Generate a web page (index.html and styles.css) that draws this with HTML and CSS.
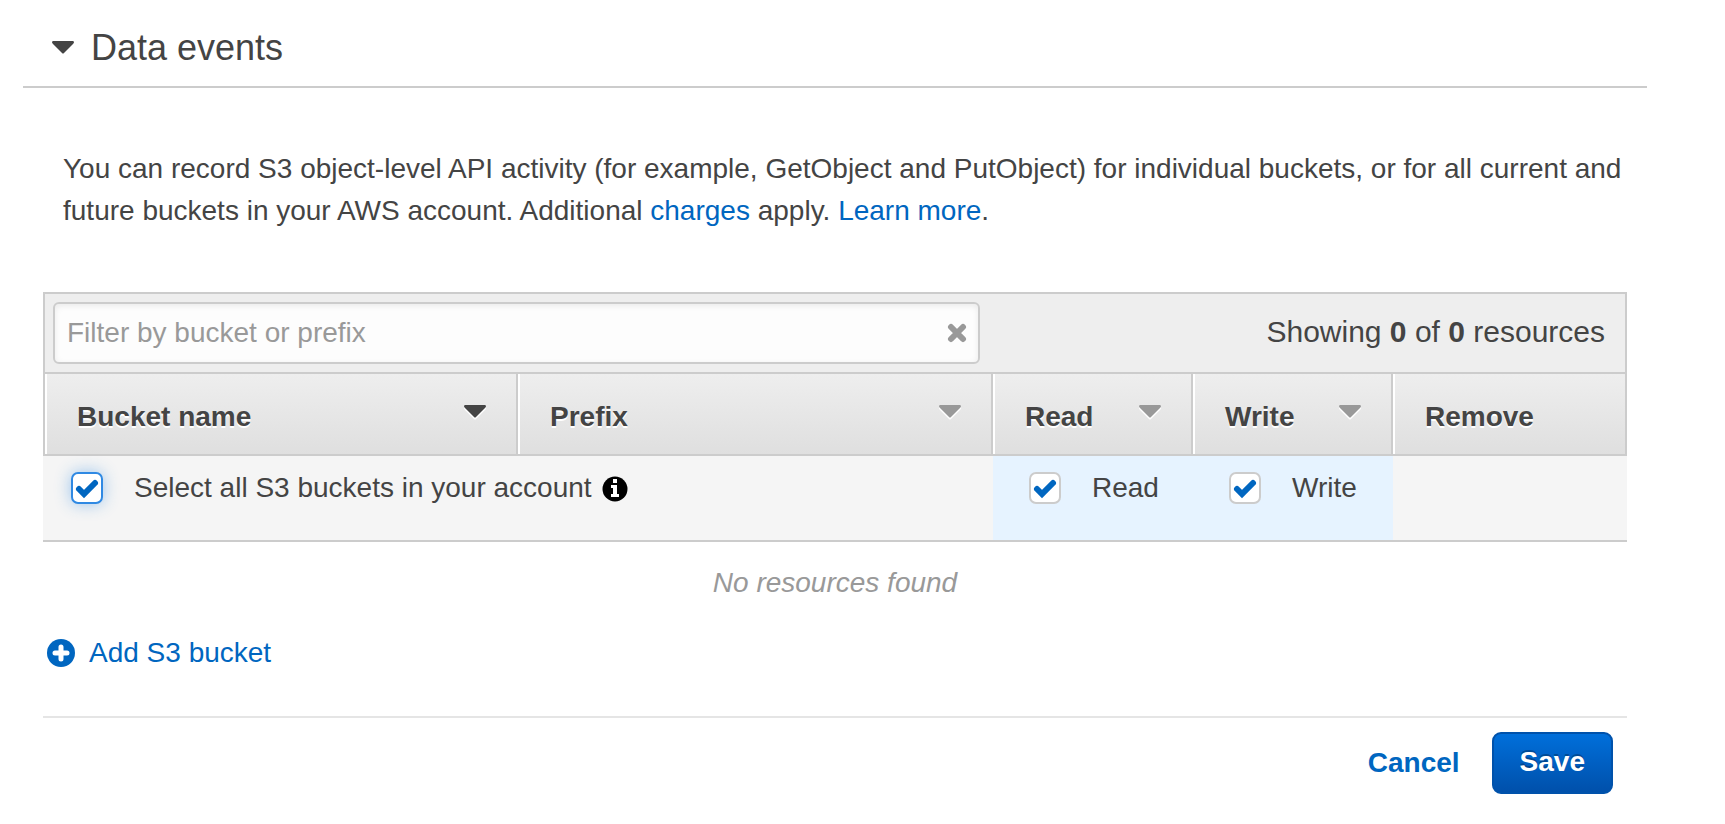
FILE: index.html
```html
<!DOCTYPE html>
<html lang="en">
<head>
  <meta charset="UTF-8" />
  <meta name="viewport" content="width=device-width, initial-scale=1" />
  <title>Data events</title>

  <link rel="stylesheet" href="styles.css">
</head>

<body>
  <div class="page">
    <!-- ===== SECTION HEADER ===== -->
    <div class="section-header">
      <svg class="caret" viewBox="0 0 22 14"><path d="M1 0h20q2 1 0 3l-9 9q-1 1-2 0L1 3q-2-2 0-3z" /></svg>
      <h1 class="section-title">Data events</h1>
    </div>

    <p class="intro">
      You can record S3 object-level API activity (for example, GetObject and PutObject) for individual buckets, or for all current and future buckets in your AWS account. Additional <a href="#">charges</a> apply. <a href="#">Learn more</a>.
    </p>

    <div class="content">
      <!-- ===== FILTER BAR ===== -->
      <div class="toolbar">
        <div class="filter">
          <input type="text" class="filter-input" placeholder="Filter by bucket or prefix" aria-label="Filter by bucket or prefix" />
          <button type="button" class="filter-clear" aria-label="Clear filter">
            <svg viewBox="0 0 20 20"><path d="M4 4l12 12M16 4L4 16" /></svg>
          </button>
        </div>
        <div class="count">Showing <b>0</b> of <b>0</b> resources</div>
      </div>

      <!-- ===== RESOURCES TABLE ===== -->
      <table class="resources">
        <colgroup>
          <col />
          <col />
          <col class="col-access" />
          <col class="col-access" />
          <col class="col-remove" />
        </colgroup>
        <thead>
          <tr>
            <th>
              <div class="head-cell">Bucket name
                <svg class="caret" viewBox="0 0 22 14"><path d="M1 0h20q2 1 0 3l-9 9q-1 1-2 0L1 3q-2-2 0-3z" /></svg>
              </div>
            </th>
            <th>
              <div class="head-cell">Prefix
                <svg class="caret muted" viewBox="0 0 22 14"><path d="M1 0h20q2 1 0 3l-9 9q-1 1-2 0L1 3q-2-2 0-3z" /></svg>
              </div>
            </th>
            <th>
              <div class="head-cell">Read
                <svg class="caret muted" viewBox="0 0 22 14"><path d="M1 0h20q2 1 0 3l-9 9q-1 1-2 0L1 3q-2-2 0-3z" /></svg>
              </div>
            </th>
            <th>
              <div class="head-cell">Write
                <svg class="caret muted" viewBox="0 0 22 14"><path d="M1 0h20q2 1 0 3l-9 9q-1 1-2 0L1 3q-2-2 0-3z" /></svg>
              </div>
            </th>
            <th>
              <div class="head-cell">Remove</div>
            </th>
          </tr>
        </thead>
        <tbody>
          <tr>
            <td colspan="2">
              <label class="check">
                <span class="box focused">
                  <input type="checkbox" checked />
                  <svg viewBox="0 0 32 32"><path d="M8 17l5 5L24 11" /></svg>
                </span>
                <span>Select all S3 buckets in your account</span>
                <svg class="info" viewBox="0 0 26 26">
                  <circle cx="13" cy="13" r="12.5" />
                  <path d="M11 3h4v4h-4zM9 9h6v9h2v3H9v-3h2v-6H9z" />
                </svg>
              </label>
            </td>
            <td class="access">
              <label class="check">
                <span class="box">
                  <input type="checkbox" checked />
                  <svg viewBox="0 0 32 32"><path d="M8 17l5 5L24 11" /></svg>
                </span>
                <span>Read</span>
              </label>
            </td>
            <td class="access">
              <label class="check">
                <span class="box">
                  <input type="checkbox" checked />
                  <svg viewBox="0 0 32 32"><path d="M8 17l5 5L24 11" /></svg>
                </span>
                <span>Write</span>
              </label>
            </td>
            <td></td>
          </tr>
        </tbody>
      </table>

      <div class="empty">No resources found</div>

      <a href="#" class="add-link">
        <svg viewBox="0 0 28 28">
          <circle cx="14" cy="14" r="14" />
          <path d="M14 8v12M8 14h12" />
        </svg>
        Add S3 bucket
      </a>

      <!-- ===== ACTIONS ===== -->
      <div class="actions">
        <a href="#" class="cancel">Cancel</a>
        <button type="button" class="save">Save</button>
      </div>
    </div>
  </div>
</body>
</html>
```

FILE: styles.css
```css
:root {
  --color-text: #444444;
  --color-muted: #999999;
  --color-link: #0066c0;
  --color-border: #cccccc;
}

/* 1) Reset + base */
* {
  margin: 0;
  padding: 0;
  box-sizing: border-box;
}
body {
  background-color: #ffffff;
  color: var(--color-text);
  font-family: "Liberation Sans", Arial, sans-serif;
  font-size: 28px;
  line-height: 42px;
}
a {
  color: var(--color-link);
  text-decoration: none;
}
.page {
  padding: 0 78px 0 23px;
}

/* 2) Section header */
.section-header {
  display: flex;
  align-items: center;
  gap: 17px;
  height: 88px;
  padding: 9px 0 0 29px;
  border-bottom: 2px solid var(--color-border);
}
.section-title {
  font-size: 36px;
  font-weight: 400;
}
.caret {
  flex: none;
  width: 22px;
  height: 14px;
  fill: var(--color-text);
}
.caret.muted {
  fill: var(--color-muted);
}
.intro {
  padding: 60px 0 0 40px;
}

/* 3) Filter bar */
.content {
  margin: 60px 20px 0;
}
.toolbar {
  display: flex;
  align-items: center;
  justify-content: space-between;
  padding: 8px 20px 8px 8px;
  background-color: #eeeeee;
  border: 2px solid var(--color-border);
}
.filter {
  position: relative;
  width: calc(60% - 4px);
}
.filter-input {
  display: block;
  width: 100%;
  height: 62px;
  padding: 0 60px 0 12px;
  font: inherit;
  color: var(--color-text);
  background-color: #fdfdfd;
  border: 2px solid var(--color-border);
  border-radius: 6px;
  box-shadow: inset 0 2px 6px rgba(0, 0, 0, 0.08);
}
.filter-input::placeholder {
  color: var(--color-muted);
  opacity: 1;
}
.filter-clear {
  position: absolute;
  top: 21px;
  right: 13px;
  width: 20px;
  height: 20px;
  background: none;
  border: none;
  cursor: pointer;
}
.filter-clear svg {
  display: block;
  stroke: var(--color-muted);
  stroke-width: 6;
  stroke-linecap: round;
}
.count {
  padding-bottom: 2px;
  font-size: 30px;
}

/* 4) Resources table */
.resources {
  width: 100%;
  table-layout: fixed;
  border-collapse: separate;
  border-spacing: 0;
  border-bottom: 2px solid var(--color-border);
}
.col-access {
  width: 200px;
}
.col-remove {
  width: 234px;
}
th {
  height: 82px;
  padding: 5px 30px 0 32px;
  text-align: left;
  text-shadow: 0 2px 0 #ffffff;
  background-image: linear-gradient(#eeeeee, #dfdfdf);
  border-right: 2px solid var(--color-border);
  border-bottom: 2px solid var(--color-border);
  box-shadow: inset 2px 0 0 #ffffff;
}
th:first-child {
  border-left: 2px solid var(--color-border);
}
.head-cell {
  display: flex;
  justify-content: space-between;
}
.head-cell .caret {
  margin-top: 9px;
  filter: drop-shadow(0 2px 0 #ffffff);
}
td {
  height: 84px;
  padding: 11px 0 0 36px;
  vertical-align: top;
  background-color: #f5f5f5;
}
td:first-child {
  padding-left: 28px;
}
td.access {
  background-color: #e6f3ff;
}

/* 5) Tick boxes */
.check {
  display: flex;
  align-items: center;
  gap: 31px;
}
.box {
  position: relative;
  flex: none;
  width: 32px;
  height: 32px;
}
.box input {
  display: block;
  width: 32px;
  height: 32px;
  appearance: none;
  background-color: #ffffff;
  border: 2px solid var(--color-border);
  border-radius: 7px;
}
.box.focused input {
  border-color: #2f89e3;
  box-shadow: 0 0 16px rgba(47, 137, 227, 0.45);
}
.box svg {
  position: absolute;
  top: 0;
  left: 0;
  display: none;
  fill: none;
  stroke: var(--color-link);
  stroke-width: 6;
  stroke-linecap: round;
  pointer-events: none;
}
.box input:checked + svg {
  display: block;
}
.info {
  width: 26px;
  height: 26px;
  margin: 2px 0 0 -21px;
}
.info path {
  fill: #ffffff;
}

/* 6) Empty state + add link */
.empty {
  padding-top: 20px;
  font-style: italic;
  text-align: center;
  color: var(--color-muted);
}
.add-link {
  display: flex;
  align-items: center;
  gap: 14px;
  width: fit-content;
  margin: 28px 0 0 4px;
}
.add-link svg {
  width: 28px;
  height: 28px;
  fill: var(--color-link);
}
.add-link path {
  stroke: #ffffff;
  stroke-width: 5;
  stroke-linecap: round;
}

/* 7) Actions */
.actions {
  display: flex;
  align-items: center;
  justify-content: flex-end;
  gap: 32px;
  margin-top: 42px;
  padding: 14px 14px 30px;
  border-top: 2px solid #e5e5e5;
}
.cancel {
  font-weight: 700;
}
.save {
  height: 62px;
  padding: 0 26px 2px;
  font: inherit;
  font-weight: 700;
  color: #ffffff;
  text-shadow: 0 -2px 0 rgba(0, 0, 0, 0.25);
  background: linear-gradient(#0070dc, #004fa9) border-box;
  border: 2px solid #0052ab;
  border-radius: 9px;
  cursor: pointer;
}
```
